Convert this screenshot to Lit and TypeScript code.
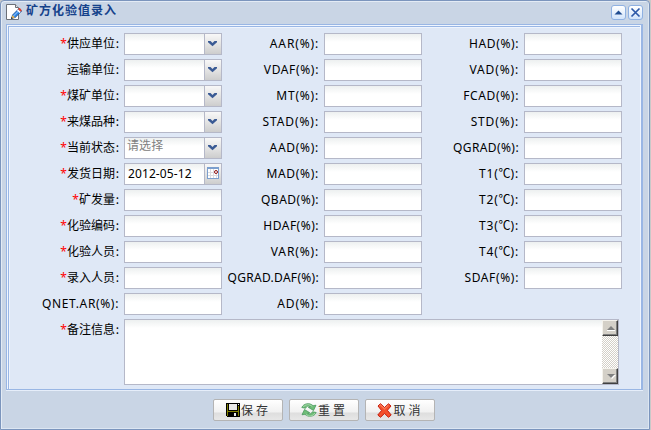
import { LitElement, html, css, svg, nothing } from "lit";
import { customElement } from "lit/decorators.js";

type Kind = "text" | "combo" | "date";
interface Field { label: string; required?: boolean; kind?: Kind; value?: string; hint?: boolean; tracking?: number; unit?: string; }

const percent = (rows: [string, number][]): Field[] => rows.map(([name, tracking]) => ({ label: `${name}(%)`, tracking }));

const COLUMNS: Field[][] = [
  [
    { label: "供应单位", required: true, kind: "combo" },
    { label: "运输单位", kind: "combo" },
    { label: "煤矿单位", required: true, kind: "combo" },
    { label: "来煤品种", required: true, kind: "combo" },
    { label: "当前状态", required: true, kind: "combo", value: "请选择", hint: true },
    { label: "发货日期", required: true, kind: "date", value: "2012-05-12" },
    { label: "矿发量", required: true },
    { label: "化验编码", required: true },
    { label: "化验人员", required: true },
    { label: "录入人员", required: true },
    ...percent([["QNET.AR", 0.65]]),
  ],
  percent([["AAR", 0.85], ["VDAF", 0.65], ["MT", 0.8], ["STAD", 0.9], ["AAD", 0.7], ["MAD", 0.7], ["QBAD", 0.5], ["HDAF", 0.5], ["VAR", 0.85], ["QGRAD.DAF", 0.3], ["AD", 0.8]]),
  [
    ...percent([["HAD", 0.6], ["VAD", 0.85], ["FCAD", 0.65], ["STD", 0.85], ["QGRAD", 0.4]]),
    ...["T1", "T2", "T3", "T4"].map((label) => ({ label, unit: "℃", tracking: 0.8 })),
    ...percent([["SDAF", 0.65]]),
  ],
];

const chevron = svg`<svg width="16" height="20" viewBox="0 0 16 20"><path d="M3 7h2.500l2 2 2-2H12v1.300L7.500 12.200 3 8.300z" fill="#3a5a94"/></svg>`;
const calendar = svg`<svg width="16" height="20" viewBox="0 0 16 20" shape-rendering="crispEdges">
  <path d="M2 3h12v12H2z" fill="#7c9fce"/><path d="M3 5h10v9H3z" fill="#fff"/>
  <path d="M5.500 5v9M8.500 5v9M3 8.500h10M3 11.500h10M11.500 10v4" stroke="#dcdce0" fill="none"/>
  <path d="M9 5h4v5H9z" fill="#fff"/><circle cx="11" cy="8" r="1.500" fill="#fff" stroke="#8d1010" shape-rendering="auto"/></svg>`;
const pencilPage = svg`<svg width="16" height="16" viewBox="0 0 16 16">
  <path d="M.5.5h9l3 3v12H.5z" fill="#fff" stroke="#6b7078"/><path d="M9.500.5v3h3" fill="#e3e3e3" stroke="#6b7078"/>
  <path d="M5.500 14.500l1-3.500 6.500-6.500 2.700 2.600-6.500 6.400z" fill="#2f86e6" stroke="#174f96" stroke-width=".8"/>
  <path d="M7.500 12l5-5" stroke="#9fd0ff"/><path d="M11 6.500l1.200-1.200 2.600 2.500-1.200 1.200z" fill="#fff"/>
  <path d="M12 5.300l1-1.300q1.500-.5 2.800 2.500l-1.200 1.300z" fill="#e3452d"/><path d="M5.500 14.500l1-3.300 2.500 2.300z" fill="#f1b64a"/><path d="M5 15l.5-2 1.300 1.300z" fill="#222"/></svg>`;
const disk = svg`<svg width="14" height="14" viewBox="0 0 14 14" shape-rendering="crispEdges">
  <path d="M0 0h14v14H1L0 13z"/><path d="M1 1h1v12H1zM12 3h1v10h-1zM2 8h10v1H2z" fill="#808000"/>
  <path d="M3 1h8v6H3z" fill="#e9e9e9"/><path d="M12 1h1v1h-1z" fill="#fff"/><path d="M8 10h2v3H8z" fill="#e9e9e9"/></svg>`;
const recycle = svg`<svg width="16" height="16" viewBox="0 0 16 16"><g fill="#6fbd78" stroke="#3c9153" stroke-width=".7" stroke-linejoin="round">
  <path d="M.8 5.500C2.500 1.500 8.500.2 12 3.700L15 3.200 12.500 8.500 7.300 5.300 9.300 4.700C7.500 3.500 5.500 4.200 4.500 6.300z"/>
  <path d="M15.200 10.500C13.500 14.500 7.500 15.800 4 12.300L1 12.800 3.500 7.500 8.700 10.700 6.700 11.300C8.500 12.500 10.500 11.800 11.500 9.700z"/></g>
  <path d="M2.200 5C4.500 2.200 8.500 1.900 11.300 4.500M5 12.500c3 2.300 7 1.800 9-1.500" fill="none" stroke="#b4e0b5" stroke-width=".8"/></svg>`;
const cross = svg`<svg width="15" height="15" viewBox="0 0 15 15"><path d="M1 3l2.500-2.300L7.500 4.500 11.500.8 14 3 10.400 7.300 14.200 12 11.500 14.300 7.500 10.400 3.500 14.300.8 12 4.600 7.500z" fill="#f4502c" stroke="#c51d0d"/><path d="M2.300 3l1.200-1 4 3.900 4-3.900" fill="none" stroke="#ff9b78"/></svg>`;

@customElement("app-root")
export class AppRoot extends LitElement {
  static styles = css`
    :host { display: block; width: 651px; height: 430px; overflow: hidden; background: #c9c9c9; font: 12px/14px "Noto Sans", "Noto Sans CJK SC", sans-serif; color: #000; }
    * { box-sizing: border-box; }
    svg { display: block; }
    .window { width: 650px; height: 430px; padding: 0 6px 0 5px; border: 1px solid #7b95bd; border-radius: 4px 4px 0 0; background: #c9d5e5; box-shadow: inset 1px 1px #e3ebf5, inset -1px -1px #dce6f2; display: flex; flex-direction: column; }
    .header { height: 23px; display: flex; align-items: flex-start; flex: none; padding-top: 3px; }
    .title { flex: 1; margin: -1px 0 0 4px; font: bold 12px/14px "Noto Sans CJK SC", sans-serif; letter-spacing: 1px; color: #15428b; }
    .tools { display: flex; gap: 2px; margin: 1px 0 0; }
    .tool { width: 15px; height: 15px; border: 1px solid #8fb1e2; border-radius: 3px; background: linear-gradient(#fff, #d2e4fb); }
    .panel { width: 637px; height: 366px; flex: none; border: 1px solid #99b6e4; border-right-width: 2px; box-shadow: 0 1px #e6eefa; background: #f0f6ff; padding: 1px 1px 0 1px; }
    .inner { height: 100%; border-top: 1px solid #99b6e4; border-left: 1px solid #99b6e4; padding-top: 6px; background: #dfe8f6; box-shadow: inset 1px 1px #eef4fd; }
    .columns { display: grid; grid-template-columns: 213px 200px 200px; }
    .row { display: flex; height: 26px; justify-content: flex-end; }
    .label { white-space: nowrap; padding: 4px 5px 0 0; }
    .cjk { font-family: "Noto Sans CJK SC", sans-serif; padding-top: 3px; }
    .unit { font-family: "Noto Sans CJK SC", sans-serif; letter-spacing: 0; line-height: 1; }
    .colon { padding-left: .7px; }
    .star { color: #f00; font-family: "Noto Sans", sans-serif; line-height: 1; }
    .box { display: flex; width: 98px; height: 22px; border: 1px solid #b5b8c8; background: linear-gradient(#edf0f0, #fff 8px); flex: none; }
    .value { flex: 1; padding: 3px 0 0 3px; white-space: nowrap; letter-spacing: .1px; }
    .hint { color: #808080; padding: 1px 0 0 2px; }
    .trigger { width: 17px; border-left: 1px solid #b5b8c8; background: linear-gradient(#f8f8f8, #e4e4e4 50%, #cdcdcd); }
    .memo { width: 495px; height: 66px; border: 1px solid #b5b8c8; background: linear-gradient(#edf0f0, #fff 8px); display: flex; justify-content: flex-end; }
    .memo-row { display: grid; grid-template-columns: 115px 495px; text-align: right; }
    .scroll { width: 16px; display: flex; flex-direction: column; justify-content: space-between; background: repeating-conic-gradient(#d4d0c8 0 25%, #fff 0 50%) 0 0 / 2px 2px; }
    .arrow { height: 16px; background: #d4d0c8; border: 1px solid; border-color: #f4f2ec #404040 #404040 #f4f2ec; box-shadow: inset -1px -1px #808080; }
    .footer { display: flex; gap: 6px; justify-content: center; padding: 9px 2px 0 0; }
    .button { width: 70px; height: 22px; border: 1px solid #b4b4b4; border-radius: 2px; background: linear-gradient(#fff, #f1f1f1 60%, #dedede 65%, #e7e7e7); display: flex; align-items: center; justify-content: center; gap: 1px; font-family: "Noto Sans CJK SC", sans-serif; color: #333; }
    .button span { letter-spacing: 3px; margin-right: -2px; }
  `;

  private label(f: Field) {
    const cjk = f.label.charCodeAt(0) > 255;
    return html`<div class="label ${cjk ? "cjk" : ""}" style=${f.tracking ? `letter-spacing:${f.tracking}px` : nothing}>${f.required ? html`<span class="star">*</span>` : nothing}${f.label}${f.unit ? html`(<span class="unit">${f.unit}</span>)` : nothing}<span class=${cjk ? "colon" : ""}>:</span></div>`;
  }

  private row(f: Field) {
    return html`<div class="row">${this.label(f)}<div class="box">
      <div class="value ${f.hint ? "hint" : ""}">${f.value ?? ""}</div>
      ${f.kind ? html`<div class="trigger">${f.kind === "date" ? calendar : chevron}</div>` : nothing}</div></div>`;
  }

  render() {
    return html`<div class="window">
      <div class="header">${pencilPage}<div class="title">矿方化验值录入</div>
        <div class="tools">
          <div class="tool"><svg width="13" height="13"><path d="M2.500 8.500l4-4 4 4z" fill="#204d91"/></svg></div>
          <div class="tool"><svg width="13" height="13"><path d="M2.500 2.500l8 8M10.500 2.500l-8 8" stroke="#2c58a8" stroke-width="1.700"/></svg></div>
        </div></div>
      <div class="panel"><div class="inner">
        <div class="columns">${COLUMNS.map((c) => html`<div>${c.map((f) => this.row(f))}</div>`)}</div>
        <div class="memo-row">${this.label({ label: "备注信息", required: true })}
          <div class="memo"><div class="scroll">
            <div class="arrow"><svg width="14" height="14"><path d="M4 9l4-4 4 4z" fill="#808080"/><path d="M4 9.500h8" stroke="#fff"/></svg></div>
            <div class="arrow"><svg width="14" height="14"><path d="M5 6h8l-4 4z" fill="#fff"/><path d="M4 5h8l-4 4z" fill="#808080"/></svg></div>
          </div></div></div>
      </div></div>
      <div class="footer">
        <div class="button">${disk}<span>保存</span></div>
        <div class="button">${recycle}<span>重置</span></div>
        <div class="button">${cross}<span>取消</span></div>
      </div></div>`;
  }
}
